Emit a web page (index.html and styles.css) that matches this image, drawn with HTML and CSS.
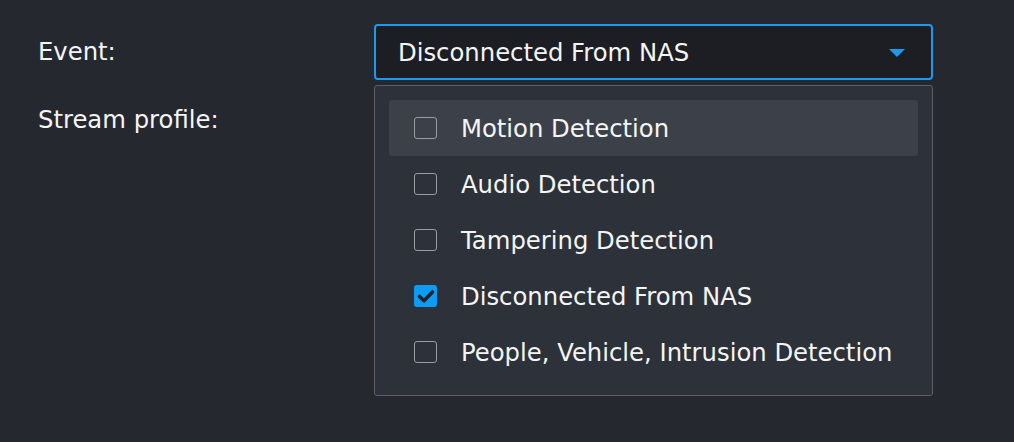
FILE: index.html
```html
<!DOCTYPE html>
<html>
<head>
<meta charset="utf-8">
<link rel="stylesheet" href="styles.css">
</head>
<body>
<div class="form">
  <div class="labels">
    <div class="label label-event">Event:</div>
    <div class="label label-stream">Stream profile:</div>
  </div>
  <div class="field">
    <div class="select">
      <span class="select-value">Disconnected From NAS</span>
      <span class="caret"></span>
    </div>
    <div class="menu">
      <div class="option hover"><span class="box"></span><span class="text">Motion Detection</span></div>
      <div class="option"><span class="box"></span><span class="text">Audio Detection</span></div>
      <div class="option"><span class="box"></span><span class="text">Tampering Detection</span></div>
      <div class="option"><span class="box checked"><svg viewBox="0 0 22 22" width="22" height="22"><path d="M4.5 11.5 L9 15.8 L17.5 7" fill="none" stroke="#1f2329" stroke-width="3.6" stroke-linecap="round" stroke-linejoin="round"/></svg></span><span class="text">Disconnected From NAS</span></div>
      <div class="option"><span class="box"></span><span class="text">People, Vehicle, Intrusion Detection</span></div>
    </div>
  </div>
</div>
</body>
</html>
```
FILE: styles.css
```css
html, body {
  margin: 0;
  padding: 0;
  background: #25282f;
  height: 100%;
}
body {
  font-family: "DejaVu Sans", Verdana, sans-serif;
  color: #f4f5f6;
  font-size: 24.3px;
}
.form {
  display: flex;
  padding: 24px 0 0 38px;
}
.labels {
  width: 336px;
  display: flex;
  flex-direction: column;
}
.label-event {
  height: 56px;
  line-height: 56px;
}
.label-stream {
  margin-top: 26px;
  line-height: 28px;
}
.field {
  width: 559px;
  display: flex;
  flex-direction: column;
}
.select {
  box-sizing: border-box;
  height: 56px;
  border: 2px solid #1a9bf0;
  border-radius: 4px;
  background: #1c1e23;
  display: flex;
  align-items: center;
  padding: 0 26px 0 22px;
}
.select-value {
  flex: 1;
}
.caret {
  width: 0;
  height: 0;
  border-left: 8px solid transparent;
  border-right: 8px solid transparent;
  border-top: 8px solid #1a9bf0;
  margin-top: 2px;
}
.menu {
  box-sizing: border-box;
  margin-top: 5px;
  height: 311px;
  border: 1px solid #5c5f65;
  border-radius: 3px;
  background: #2d3139;
  padding: 14px 14px;
}
.option {
  height: 56px;
  display: flex;
  align-items: center;
  padding-left: 25px;
  border-radius: 3px;
}
.option.hover {
  background: #3c4149;
}
.box {
  box-sizing: border-box;
  width: 23px;
  height: 22px;
  border: 1.5px solid #9a9c9f;
  border-radius: 3px;
  margin-right: 24px;
  display: flex;
  align-items: center;
  justify-content: center;
  flex: none;
}
.box.checked {
  border: none;
  background: #0d9bf5;
}
.text {
  white-space: nowrap;
}
```
